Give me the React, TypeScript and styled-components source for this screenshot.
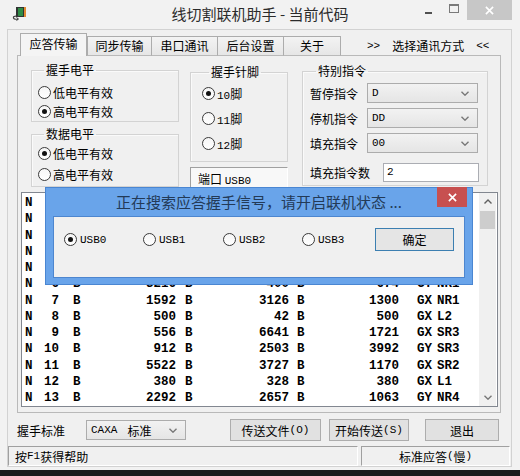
import React from "react";
import styled, { createGlobalStyle } from "styled-components";

const CJK = `"Noto Sans CJK SC", "Noto Sans", sans-serif`;
const MONO = `"Liberation Mono", "DejaVu Sans Mono", monospace`;

const GlobalStyle = createGlobalStyle`
  html, body { margin: 0; padding: 0; background: #1c1c1c; }
  body { width: 520px; height: 476px; overflow: hidden; font-family: ${CJK}; }
  * { box-sizing: border-box; }
`;

// ---------- window frame ----------
const Window = styled.div`
  position: relative;
  width: 520px;
  height: 470px;
  background: #f2f2f2;
  display: flex;
  flex-direction: column;
  font-family: ${CJK};
  font-size: 12px;
  color: #000;
`;

const TitleBar = styled.div`
  height: 29px;
  flex: none;
  display: grid;
  grid-template-columns: 1fr auto 1fr;
`;

const AppIcon = styled.div`
  padding: 5px 0 0 11px;
`;

const Title = styled.div`
  font-size: 15px;
  line-height: 28px;
  color: #2b2b2b;
  white-space: pre;
`;

const Controls = styled.div`
  justify-self: end;
  display: flex;
  margin-right: 8px;
  height: 20px;
`;

const CtlButton = styled.div<{ $w: number; $bg?: string }>`
  width: ${(p) => p.$w}px;
  height: 20px;
  background: ${(p) => p.$bg || "transparent"};
  display: flex;
  align-items: center;
  justify-content: center;
`;

const MinGlyph = styled.span`
  width: 7px;
  height: 2px;
  margin-top: 5px;
  background: #505050;
`;

const MaxGlyph = styled.span`
  width: 10px;
  height: 9px;
  margin-top: -3px;
  border: 1px solid #7a7a7a;
  border-top-width: 2px;
`;

const Client = styled.div`
  flex: 1;
  margin: 0 8px 3px 7px;
  border: 1px solid #d2d2d2;
  background: #f0f0f0;
  display: flex;
  flex-direction: column;
`;

// ---------- tabs ----------
const TabRow = styled.div`
  margin: 3px 0 -1px 12px;
  height: 23px;
  display: flex;
  align-items: flex-end;
  position: relative;
  z-index: 1;
`;

const Tab = styled.div<{ $w: number; $active?: boolean }>`
  width: ${(p) => p.$w}px;
  height: ${(p) => (p.$active ? 23 : 20)}px;
  margin-right: ${(p) => (p.$active ? 0 : -1)}px;
  border: 1px solid #acacac;
  border-bottom: ${(p) => (p.$active ? "none" : "1px solid #b9b9b9")};
  background: ${(p) =>
    p.$active ? "#f4f4f4" : "linear-gradient(#f3f3f3, #e6e6e6)"};
  display: flex;
  align-items: center;
  justify-content: center;
  padding-bottom: ${(p) => (p.$active ? 2 : 0)}px;
  font-size: 12px;
  line-height: 14px;
`;

const Chooser = styled.div`
  margin-left: 27px;
  align-self: center;
  display: flex;
  gap: 12px;
  align-items: center;
  font-size: 12px;
  padding-top: 2px;
`;

const Panel = styled.div`
  margin-left: 9px;
  width: 484px;
  height: 358px;
  border: 1px solid #b9b9b9;
  background: #f0f0f0;
  display: flex;
  flex-direction: column;
`;

const TopArea = styled.div`
  height: 136px;
  padding: 7px 0 0 13px;
  display: flex;
  align-items: flex-start;
`;

const Column = styled.div<{ $w: number; $ml?: number; $mt?: number }>`
  width: ${(p) => p.$w}px;
  margin-left: ${(p) => p.$ml || 0}px;
  margin-top: ${(p) => p.$mt || 0}px;
  display: flex;
  flex-direction: column;
`;

const Group = styled.fieldset<{ $pt: number; $pb: number; $pl: number; $mt?: number; $gap?: number }>`
  margin: ${(p) => p.$mt || 0}px 0 0 0;
  padding: ${(p) => p.$pt}px 8px ${(p) => p.$pb}px ${(p) => p.$pl}px;
  border: 1px solid #d3d3d3;
  box-shadow: inset 1px 1px 0 #fafafa;
  min-width: 0;
  display: flex;
  flex-direction: column;
  gap: ${(p) => p.$gap || 0}px;
`;

const Legend = styled.legend<{ $ml?: number }>`
  padding: 0 2px;
  margin-left: ${(p) => p.$ml ?? 6}px;
  font-size: 12px;
  line-height: 14px;
`;

const RadioItem = styled.div<{ $w?: number }>`
  display: flex;
  align-items: center;
  height: 17px;
  gap: 2px;
  width: ${(p) => (p.$w ? `${p.$w}px` : "auto")};
  font-size: 12px;
  white-space: pre;
`;

const RadioDot = styled.span<{ $on?: boolean }>`
  position: relative;
  flex: none;
  width: 13px;
  height: 13px;
  border-radius: 50%;
  border: 1px solid #3a3a3a;
  background: linear-gradient(#f6f6f6, #ffffff);
  &::after {
    content: "";
    display: ${(p) => (p.$on ? "block" : "none")};
    position: absolute;
    left: 3px;
    top: 3px;
    width: 5px;
    height: 5px;
    border-radius: 50%;
    background: #111;
  }
`;

const Latin = styled.span`
  font-family: ${MONO};
  font-size: 11px;
`;

const PortBox = styled.div`
  margin-top: 5px;
  height: 22px;
  border-top: 1px solid #a0a0a0;
  border-left: 1px solid #a0a0a0;
  border-right: 1px solid #ffffff;
  background: #f8f8f8;
  padding: 2px 0 0 7px;
  font-size: 12px;
  white-space: pre;
`;

const FieldRow = styled.div<{ $mt?: number }>`
  display: flex;
  align-items: center;
  height: 20px;
  margin-top: ${(p) => p.$mt || 0}px;
`;

const FieldLabel = styled.span<{ $w: number }>`
  width: ${(p) => p.$w}px;
  font-size: 12px;
  flex: none;
`;

const Combo = styled.div<{ $w: number; $h?: number }>`
  width: ${(p) => p.$w}px;
  height: ${(p) => p.$h || 20}px;
  border: 1px solid #acacac;
  background: linear-gradient(#f2f2f2, #e5e5e5);
  display: flex;
  align-items: center;
  padding: 0 8px 0 4px;
  font-size: 12px;
  white-space: pre;
  flex: none;
  svg {
    margin-left: auto;
  }
`;

const ComboCJK = styled.span`
  margin-left: 10px;
`;

const EditBox = styled.div`
  margin-left: auto;
  width: 96px;
  height: 19px;
  border: 1px solid #abadb3;
  background: #fff;
  padding-left: 3px;
  display: flex;
  align-items: center;
`;

// ---------- list ----------
const ListBox = styled.div`
  margin: 0 2px 0 3px;
  height: 215px;
  border: 1px solid #828790;
  background: #fff;
  display: flex;
`;

const Rows = styled.div`
  flex: 1;
  padding: 2px 0 0 3px;
  overflow: hidden;
`;

const Row = styled.div`
  display: flex;
  height: 16.25px;
  line-height: 16.25px;
  font-family: ${MONO};
  font-weight: bold;
  font-size: 12.5px;
  white-space: pre;
  color: #000;
`;

const Cell = styled.span<{ $w?: number; $right?: boolean; $pl?: number }>`
  flex: none;
  width: ${(p) => (p.$w ? `${p.$w}px` : "auto")};
  text-align: ${(p) => (p.$right ? "right" : "left")};
  padding-left: ${(p) => p.$pl || 0}px;
`;

const ScrollBar = styled.div`
  width: 17px;
  margin-right: 1px;
  background: #f0f0f0;
  display: flex;
  flex-direction: column;
`;

const ScrollBtn = styled.div`
  height: 17px;
  display: flex;
  align-items: center;
  justify-content: center;
`;

const Thumb = styled.div`
  height: 18px;
  margin: 1px 1px 0 1px;
  background: #cdcdcd;
`;

const Track = styled.div`
  flex: 1;
`;

// ---------- bottom ----------
const BottomRow = styled.div`
  margin-top: 6px;
  height: 22px;
  display: flex;
  align-items: center;
`;

const BottomLabel = styled.span`
  margin-left: 9px;
  width: 69px;
  font-size: 12px;
`;

const Button = styled.div<{ $w: number; $ml: number; $h?: number; $default?: boolean }>`
  width: ${(p) => p.$w}px;
  height: ${(p) => p.$h || 22}px;
  margin-left: ${(p) => p.$ml}px;
  border: 1px solid ${(p) => (p.$default ? "#3c7fb1" : "#adadad")};
  background: ${(p) => (p.$default ? "#e5e5e5" : "#e1e1e1")};
  display: flex;
  align-items: center;
  justify-content: center;
  font-size: 12px;
  white-space: pre;
  flex: none;
`;

const StatusBar = styled.div`
  margin-top: 5px;
  height: 20px;
  display: flex;
  gap: 3px;
`;

const StatusPane = styled.div<{ $w: number; $center?: boolean }>`
  width: ${(p) => p.$w}px;
  height: 20px;
  border-top: 1px solid #a0a0a0;
  border-left: 1px solid #a0a0a0;
  border-right: 1px solid #fff;
  border-bottom: 1px solid #fff;
  display: flex;
  align-items: center;
  justify-content: ${(p) => (p.$center ? "center" : "flex-start")};
  padding-left: ${(p) => (p.$center ? 0 : 6)}px;
  font-size: 12px;
  white-space: pre;
`;

// ---------- dialog ----------
const Dialog = styled.div`
  position: absolute;
  left: 45px;
  top: 187px;
  width: 428px;
  height: 98px;
  background: #69a4ea;
  border: 1px solid #4a86d2;
  display: flex;
  flex-direction: column;
  z-index: 5;
`;

const DlgTitleBar = styled.div`
  height: 28px;
  display: grid;
  grid-template-columns: 1fr auto 1fr;
`;

const DlgTitle = styled.div`
  font-size: 15px;
  line-height: 27px;
  color: #233a57;
  white-space: pre;
`;

const DlgClose = styled.div`
  justify-self: end;
  margin: -1px 5px 0 0;
  width: 30px;
  height: 20px;
  background: #c75050;
  display: flex;
  align-items: center;
  justify-content: center;
`;

const DlgClient = styled.div`
  flex: 1;
  margin: 0 7px 6px 7px;
  border: 1px solid #4d86cf;
  background: #f0f0f0;
  display: flex;
  align-items: flex-start;
  padding: 11px 0 0 10px;
`;

const DlgRadio = styled(RadioItem)`
  height: 23px;
  gap: 3px;
`;

const Chevron = ({ up }: { up?: boolean }) => (
  <svg width="8" height="5" viewBox="0 0 8 5">
    <path
      d={up ? "M0.5 4.5 L4 1 L7.5 4.5" : "M0.5 0.8 L4 4.2 L7.5 0.8"}
      fill="none"
      stroke={up ? "#606060" : "#777"}
      strokeWidth="1.4"
    />
  </svg>
);

const CloseX = ({ size = 9 }: { size?: number }) => (
  <svg width={size} height={size} viewBox="0 0 10 10">
    <path d="M1 1 L9 9 M9 1 L1 9" stroke="#fff" strokeWidth="1.8" />
  </svg>
);

const Icon = () => (
  <svg width="16" height="16" viewBox="0 0 16 16">
    <rect x="5" y="2" width="9" height="10" fill="#2f3432" />
    <rect x="7" y="3" width="5" height="8" fill="#2f8c45" />
    <rect x="13" y="2" width="2" height="10" fill="#e38b33" />
    <path d="M8 11.5 C5 11 2 10.8 2.5 13 C3 14.5 6 14.2 7 14" fill="none" stroke="#3a3a3a" strokeWidth="1.2" />
    <path d="M5.5 12.5 L7.5 14 L5.5 15.5" fill="none" stroke="#3a3a3a" strokeWidth="1" />
  </svg>
);

type Rec = [string, string, string, string, string];

const data: Rec[] = [
  ["1", "2000", "1200", "1570", "GX L1"],
  ["2", "3380", "460", "2216", "GY NR2"],
  ["3", "1040", "2870", "906", "GX SR1"],
  ["4", "752", "5312", "3420", "GY L3"],
  ["5", "4096", "118", "1180", "GX NR3"],
  ["6", "3216", "400", "674", "GY NR1"],
  ["7", "1592", "3126", "1300", "GX NR1"],
  ["8", "500", "42", "500", "GX L2"],
  ["9", "556", "6641", "1721", "GX SR3"],
  ["10", "912", "2503", "3992", "GY SR3"],
  ["11", "5522", "3727", "1170", "GX SR2"],
  ["12", "380", "328", "380", "GX L1"],
  ["13", "2292", "2657", "1063", "GY NR4"],
];

export default function App() {
  return (
    <>
      <GlobalStyle />
      <Window>
        <TitleBar>
          <AppIcon>
            <Icon />
          </AppIcon>
          <Title>线切割联机助手 - 当前代码</Title>
          <Controls>
            <CtlButton $w={26}>
              <MinGlyph />
            </CtlButton>
            <CtlButton $w={26}>
              <MaxGlyph />
            </CtlButton>
            <CtlButton $w={45} $bg="#c7c7c7">
              <CloseX />
            </CtlButton>
          </Controls>
        </TitleBar>

        <Client>
          <TabRow>
            <Tab $w={67} $active>应答传输</Tab>
            <Tab $w={65}>同步传输</Tab>
            <Tab $w={67}>串口通讯</Tab>
            <Tab $w={67}>后台设置</Tab>
            <Tab $w={58}>关于</Tab>
            <Chooser>
              <Latin>&gt;&gt;</Latin>
              <span>选择通讯方式</span>
              <Latin>&lt;&lt;</Latin>
            </Chooser>
          </TabRow>

          <Panel>
            <TopArea>
              <Column $w={148}>
                <Group $pt={7} $pb={1} $pl={6} $gap={2}>
                  <Legend>握手电平</Legend>
                  <RadioItem>
                    <RadioDot />
                    <span>低电平有效</span>
                  </RadioItem>
                  <RadioItem>
                    <RadioDot $on />
                    <span>高电平有效</span>
                  </RadioItem>
                </Group>
                <Group $pt={4} $pb={3} $pl={6} $gap={4} $mt={5}>
                  <Legend>数据电平</Legend>
                  <RadioItem>
                    <RadioDot $on />
                    <span>低电平有效</span>
                  </RadioItem>
                  <RadioItem>
                    <RadioDot />
                    <span>高电平有效</span>
                  </RadioItem>
                </Group>
              </Column>

              <Column $w={98} $ml={11} $mt={2}>
                <Group $pt={6} $pb={9} $pl={11} $gap={8}>
                  <Legend $ml={7}>握手针脚</Legend>
                  <RadioItem>
                    <RadioDot $on />
                    <span>
                      <Latin>10</Latin>脚
                    </span>
                  </RadioItem>
                  <RadioItem>
                    <RadioDot />
                    <span>
                      <Latin>11</Latin>脚
                    </span>
                  </RadioItem>
                  <RadioItem>
                    <RadioDot />
                    <span>
                      <Latin>12</Latin>脚
                    </span>
                  </RadioItem>
                </Group>
                <PortBox>
                  端口 <Latin>USB0</Latin>
                </PortBox>
              </Column>

              <Column $w={186} $ml={14} $mt={1}>
                <Group $pt={5} $pb={3} $pl={7} $gap={5}>
                  <Legend>特别指令</Legend>
                  <FieldRow>
                    <FieldLabel $w={57}>暂停指令</FieldLabel>
                    <Combo $w={111}>
                      <Latin>D</Latin>
                      <Chevron />
                    </Combo>
                  </FieldRow>
                  <FieldRow>
                    <FieldLabel $w={57}>停机指令</FieldLabel>
                    <Combo $w={111}>
                      <Latin>DD</Latin>
                      <Chevron />
                    </Combo>
                  </FieldRow>
                  <FieldRow>
                    <FieldLabel $w={57}>填充指令</FieldLabel>
                    <Combo $w={111}>
                      <Latin>00</Latin>
                      <Chevron />
                    </Combo>
                  </FieldRow>
                  <FieldRow $mt={4}>
                    <FieldLabel $w={62}>填充指令数</FieldLabel>
                    <EditBox>
                      <Latin>2</Latin>
                    </EditBox>
                  </FieldRow>
                </Group>
              </Column>
            </TopArea>

            <ListBox>
              <Rows>
                {data.map(([n, a, b, c, g]) => {
                  const [gx, nr] = g.split(" ");
                  return (
                    <Row key={n}>
                      <Cell $w={10}>N</Cell>
                      <Cell $w={24} $right>{n}</Cell>
                      <Cell $w={30} $pl={14}>B</Cell>
                      <Cell $w={87} $right>{a}</Cell>
                      <Cell $w={25} $pl={9}>B</Cell>
                      <Cell $w={88} $right>{b}</Cell>
                      <Cell $w={25} $pl={8}>B</Cell>
                      <Cell $w={85} $right>{c}</Cell>
                      <Cell $w={38} $pl={18}>{gx}</Cell>
                      <Cell>{nr}</Cell>
                    </Row>
                  );
                })}
              </Rows>
              <ScrollBar>
                <ScrollBtn>
                  <Chevron up />
                </ScrollBtn>
                <Thumb />
                <Track />
                <ScrollBtn>
                  <Chevron />
                </ScrollBtn>
              </ScrollBar>
            </ListBox>
          </Panel>

          <BottomRow>
            <BottomLabel>握手标准</BottomLabel>
            <Combo $w={100}>
              <Latin>CAXA</Latin>
              <ComboCJK>标准</ComboCJK>
              <Chevron />
            </Combo>
            <Button $w={91} $ml={44}>
              传送文件<Latin>(O)</Latin>
            </Button>
            <Button $w={80} $ml={8}>
              开始传送<Latin>(S)</Latin>
            </Button>
            <Button $w={74} $ml={16}>退出</Button>
          </BottomRow>

          <StatusBar>
            <StatusPane $w={350}>
              按<Latin>F1</Latin>获得帮助
            </StatusPane>
            <StatusPane $w={149} $center>
              标准应答<Latin>(</Latin>慢<Latin>)</Latin>
            </StatusPane>
          </StatusBar>
        </Client>

        <Dialog>
          <DlgTitleBar>
            <span />
            <DlgTitle>正在搜索应答握手信号，请开启联机状态 ...</DlgTitle>
            <DlgClose>
              <CloseX size={9} />
            </DlgClose>
          </DlgTitleBar>
          <DlgClient>
            <DlgRadio $w={79}>
              <RadioDot $on />
              <Latin>USB0</Latin>
            </DlgRadio>
            <DlgRadio $w={80}>
              <RadioDot />
              <Latin>USB1</Latin>
            </DlgRadio>
            <DlgRadio $w={79}>
              <RadioDot />
              <Latin>USB2</Latin>
            </DlgRadio>
            <DlgRadio $w={73}>
              <RadioDot />
              <Latin>USB3</Latin>
            </DlgRadio>
            <Button $w={79} $h={23} $ml={0} $default>
              确定
            </Button>
          </DlgClient>
        </Dialog>
      </Window>
    </>
  );
}
